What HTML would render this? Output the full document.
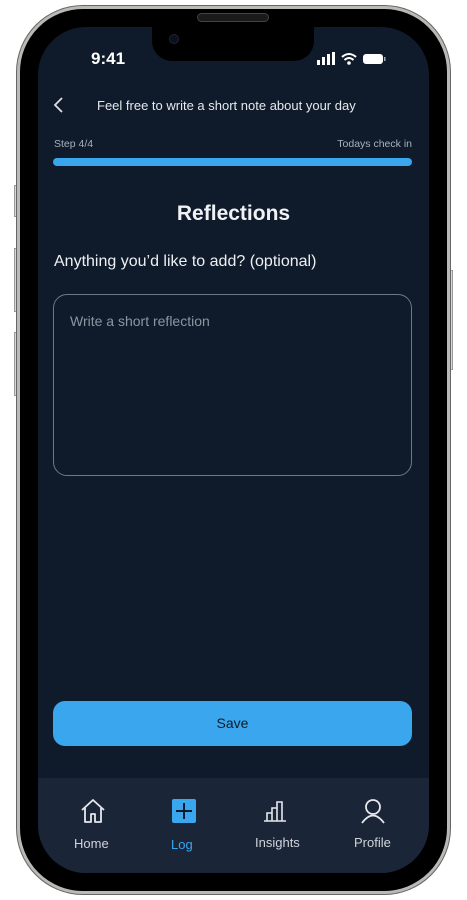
<!DOCTYPE html>
<html><head><meta charset="utf-8"><style>
*{margin:0;padding:0;box-sizing:border-box}
body{width:467px;height:900px;background:#fff;position:relative;overflow:hidden;font-family:"Liberation Sans",sans-serif}
.btn{position:absolute;background:#d8d8d8;border:1px solid #999;width:4px}
.frame{position:absolute;left:17px;top:6px;width:433px;height:888px;border-radius:66px;background:#000;border:3px solid #b9b9b6;box-shadow:0 0 0 1px #666}
.screen{position:absolute;left:38px;top:27px;width:391px;height:846px;border-radius:48px;background:#0f1b2b;overflow:hidden}
.notch{position:absolute;left:152px;top:27px;width:162px;height:34px;background:#000;border-radius:0 0 20px 20px}
.spk{position:absolute;left:197px;top:13px;width:72px;height:9px;border-radius:5px;background:#1a1a1a;border:1px solid #444}
.cam{position:absolute;left:169px;top:34px;width:10px;height:10px;border-radius:50%;background:#0a1020;border:1px solid #223}
.t{position:absolute;color:#fff;white-space:nowrap}
.nav{position:absolute;left:0;top:751px;width:391px;height:95px;background:#1b2538}
</style></head><body>
<div class="btn" style="left:14px;top:185px;height:32px"></div>
<div class="btn" style="left:14px;top:248px;height:64px"></div>
<div class="btn" style="left:14px;top:332px;height:64px"></div>
<div class="btn" style="left:449px;top:270px;height:100px"></div>
<div class="frame"></div>
<div class="screen">
  <div class="t" style="left:53px;top:22px;font-size:17px;font-weight:bold">9:41</div>
  <svg style="position:absolute;left:279px;top:25px" width="70" height="14">
    <rect x="0" y="8" width="3" height="5" fill="#fff"/><rect x="5" y="5" width="3" height="8" fill="#fff"/><rect x="10" y="2" width="3" height="11" fill="#fff"/><rect x="15" y="0" width="3" height="13" fill="#fff"/>
    <path d="M25 5 Q32 -1 39 5 M27.5 8 Q32 4 36.5 8" stroke="#fff" stroke-width="2" fill="none"/><circle cx="32" cy="11" r="1.8" fill="#fff"/>
    <rect x="46" y="2" width="20" height="10" rx="3" fill="#fff"/><rect x="67" y="5" width="1.5" height="4" fill="#aaa"/>
  </svg>
  <svg style="position:absolute;left:15px;top:70px" width="12" height="16"><path d="M9 1 L2 8 L9 15" stroke="#ddd" stroke-width="1.8" fill="none"/></svg>
  <div class="t" style="left:59px;top:71px;font-size:13px;color:#e6e8ec">Feel free to write a short note about your day</div>
  <div class="t" style="left:16px;top:111px;font-size:10.5px;color:#aab0ba">Step 4/4</div>
  <div class="t" style="right:17px;top:111px;font-size:10.5px;color:#aab0ba">Todays check in</div>
  <div style="position:absolute;left:15px;top:131px;width:359px;height:8px;border-radius:4px;background:#3aa6ee"></div>
  <div class="t" style="left:0;width:391px;text-align:center;top:175px;font-size:21px;font-weight:bold;color:#f0f2f5">Reflections</div>
  <div class="t" style="left:16px;top:226px;font-size:16px;color:#eef0f3">Anything you’d like to add? (optional)</div>
  <div style="position:absolute;left:15px;top:267px;width:359px;height:182px;border:1.5px solid #6f7885;border-radius:14px"></div>
  <div class="t" style="left:32px;top:286px;font-size:14px;color:#8d95a1">Write a short reflection</div>
  <div style="position:absolute;left:15px;top:674px;width:359px;height:45px;border-radius:12px;background:#3aa6ee;color:#0f1b2b;font-size:14px;text-align:center;line-height:45px">Save</div>
  <div class="nav">
    <svg style="position:absolute;left:42px;top:20px" width="26" height="26"><path d="M2 12 L13 2 L24 12 M5 10 V24 H11 V16 H15 V24 H21 V10" stroke="#e6e8ec" stroke-width="1.8" fill="none" stroke-linejoin="round"/></svg>
    <div class="t" style="left:36px;top:58px;font-size:13px;color:#d0d4da">Home</div>
    <div style="position:absolute;left:134px;top:21px;width:24px;height:24px;background:#3aa6ee;border-radius:2px"></div>
    <svg style="position:absolute;left:134px;top:21px" width="24" height="24"><path d="M12 4 V20 M4 12 H20" stroke="#0f1b2b" stroke-width="2"/></svg>
    <div class="t" style="left:133px;top:59px;font-size:13px;color:#3aa6ee">Log</div>
    <svg style="position:absolute;left:225px;top:22px" width="24" height="22"><path d="M1 21 H23 M4 21 V13 H9 V21 M9 21 V8 H14 V21 M14 21 V2 H19 V21" stroke="#e6e8ec" stroke-width="1.6" fill="none"/></svg>
    <div class="t" style="left:217px;top:57px;font-size:13px;color:#d0d4da">Insights</div>
    <svg style="position:absolute;left:322px;top:20px" width="26" height="26"><circle cx="13" cy="9" r="7" stroke="#e6e8ec" stroke-width="1.8" fill="none"/><path d="M2 25 Q13 10 24 25" stroke="#e6e8ec" stroke-width="1.8" fill="none"/></svg>
    <div class="t" style="left:316px;top:57px;font-size:13px;color:#d0d4da">Profile</div>
  </div>
</div>
<div class="notch"></div>
<div class="spk"></div>
<div class="cam"></div>
</body></html>
